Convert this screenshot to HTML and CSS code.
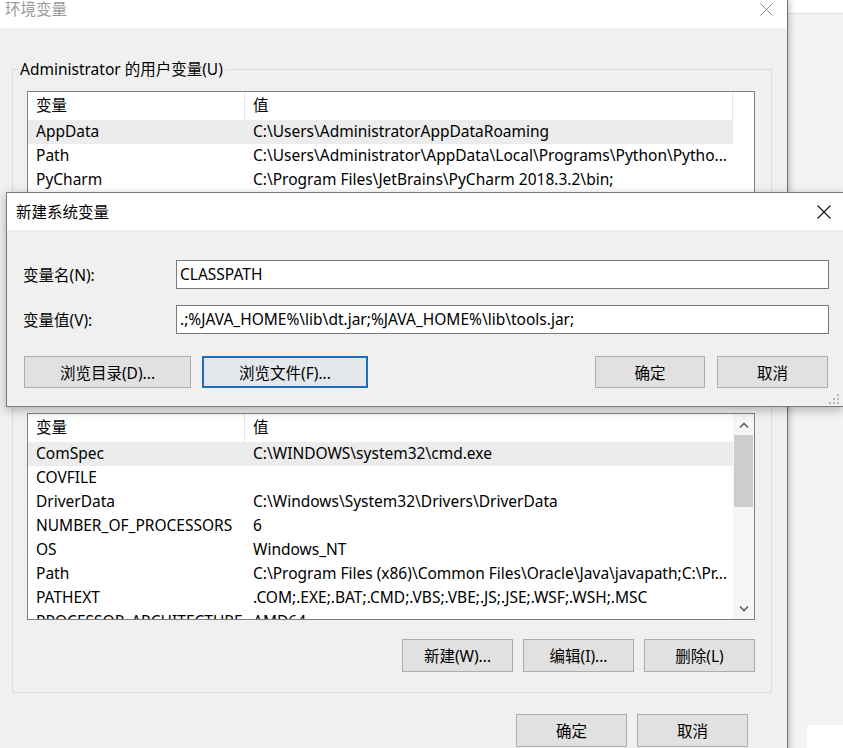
FILE: index.html
```html
<!DOCTYPE html>
<html lang="zh-CN">
<head>
<meta charset="utf-8">
<title>环境变量</title>
<link rel="stylesheet" href="styles.css">
</head>
<body>
<div class="desktop">
  <div class="bg-top"></div>
  <div class="bg-box"></div>

  <div class="win">
    <div class="win-title">
      <span class="win-title-text">环境变量</span>
      <svg class="win-close" width="13" height="13" viewBox="0 0 13 13"><path d="M0.5 0.5L12.5 12.5M12.5 0.5L0.5 12.5" stroke="#8c8c8c" stroke-width="1" fill="none"/></svg>
    </div>
    <div class="win-body">
      <div class="group g1">
        <div class="legend">Administrator 的用户变量(U)</div>
        <div class="list l1">
          <div class="table">
            <div class="hdr"><div class="c1">变量</div><div class="c2">值</div></div>
            <div class="row sel"><div class="c1">AppData</div><div class="c2">C:\Users\AdministratorAppDataRoaming</div></div>
            <div class="row"><div class="c1">Path</div><div class="c2">C:\Users\Administrator\AppData\Local\Programs\Python\Pytho...</div></div>
            <div class="row"><div class="c1">PyCharm</div><div class="c2">C:\Program Files\JetBrains\PyCharm 2018.3.2\bin;</div></div>
          </div>
        </div>
      </div>

      <div class="group g2">
        <div class="list l2">
          <div class="table">
            <div class="hdr"><div class="c1">变量</div><div class="c2">值</div></div>
            <div class="row sel"><div class="c1">ComSpec</div><div class="c2">C:\WINDOWS\system32\cmd.exe</div></div>
            <div class="row"><div class="c1">COVFILE</div><div class="c2"></div></div>
            <div class="row"><div class="c1">DriverData</div><div class="c2">C:\Windows\System32\Drivers\DriverData</div></div>
            <div class="row"><div class="c1">NUMBER_OF_PROCESSORS</div><div class="c2">6</div></div>
            <div class="row"><div class="c1">OS</div><div class="c2">Windows_NT</div></div>
            <div class="row"><div class="c1">Path</div><div class="c2">C:\Program Files (x86)\Common Files\Oracle\Java\javapath;C:\Pr...</div></div>
            <div class="row"><div class="c1">PATHEXT</div><div class="c2">.COM;.EXE;.BAT;.CMD;.VBS;.VBE;.JS;.JSE;.WSF;.WSH;.MSC</div></div>
            <div class="row"><div class="c1">PROCESSOR_ARCHITECTURE</div><div class="c2">AMD64</div></div>
          </div>
          <div class="sb">
            <div class="sb-btn"><svg width="10" height="6" viewBox="0 0 10 6"><path d="M1 5.5L5 1.5L9 5.5" stroke="#606060" stroke-width="1.6" fill="none"/></svg></div>
            <div class="sb-thumb"></div>
            <div class="sb-track"></div>
            <div class="sb-btn"><svg width="10" height="6" viewBox="0 0 10 6"><path d="M1 0.5L5 4.5L9 0.5" stroke="#606060" stroke-width="1.6" fill="none"/></svg></div>
          </div>
        </div>
        <div class="btn-row">
          <button class="btn">新建(W)...</button>
          <button class="btn">编辑(I)...</button>
          <button class="btn">删除(L)</button>
        </div>
      </div>

      <div class="win-actions">
        <button class="btn">确定</button>
        <button class="btn">取消</button>
      </div>
    </div>
  </div>

  <div class="dlg">
    <div class="dlg-title">
      <span>新建系统变量</span>
      <svg class="dlg-close" width="14" height="14" viewBox="0 0 14 14"><path d="M0.5 0.5L13.5 13.5M13.5 0.5L0.5 13.5" stroke="#111" stroke-width="1.1" fill="none"/></svg>
    </div>
    <div class="dlg-body">
      <div class="field">
        <label class="field-label">变量名(N):</label>
        <div class="field-input">CLASSPATH</div>
      </div>
      <div class="field">
        <label class="field-label">变量值(V):</label>
        <div class="field-input">.;%JAVA_HOME%\lib\dt.jar;%JAVA_HOME%\lib\tools.jar;</div>
      </div>
      <div class="dlg-btns">
        <button class="btn w167">浏览目录(D)...</button>
        <button class="btn w166 focus">浏览文件(F)...</button>
        <button class="btn w110 push">确定</button>
        <button class="btn w111">取消</button>
      </div>
    </div>
    <svg class="grip" width="10" height="10" viewBox="0 0 10 10">
      <rect x="8" y="0" width="2" height="2" fill="#b8b8b8"/>
      <rect x="4" y="4" width="2" height="2" fill="#b8b8b8"/>
      <rect x="8" y="4" width="2" height="2" fill="#b8b8b8"/>
      <rect x="0" y="8" width="2" height="2" fill="#b8b8b8"/>
      <rect x="4" y="8" width="2" height="2" fill="#b8b8b8"/>
      <rect x="8" y="8" width="2" height="2" fill="#b8b8b8"/>
    </svg>
  </div>
</div>
</body>
</html>
```

FILE: styles.css
```css
* { box-sizing: border-box; }

body {
  margin: 0;
  font-family: "Noto Sans", "Noto Sans CJK SC", sans-serif;
  font-size: 15.5px;
  color: #000;
}

.desktop {
  position: relative;
  width: 843px;
  height: 748px;
  overflow: hidden;
  background: #f3f3f4;
}

.bg-top {
  height: 14px;
  background: #fff;
  border-bottom: 1px solid #e3e3e3;
}

.bg-box {
  position: absolute;
  left: 807px;
  top: 725px;
  width: 36px;
  height: 23px;
  background: #fff;
}

/* main window */
.win {
  position: absolute;
  left: 0;
  top: 0;
  width: 788px;
  height: 770px;
  background: #f0f0f0;
  border-right: 1px solid #707070;
  box-shadow: 2px 0 6px rgba(0, 0, 0, 0.22);
}

.win-title {
  height: 28px;
  background: #fff;
  display: flex;
  justify-content: space-between;
  align-items: flex-start;
  padding: 0 14px 0 5px;
}

.win-title-text {
  line-height: 18px;
  color: #9a9a9a;
}

.win-close { margin-top: 3px; }

.win-body { padding-top: 41px; }

.group {
  margin-left: 12px;
  width: 760px;
  border: 1px solid #dcdcdc;
}

.legend {
  display: table;
  margin: -11px 0 0 4px;
  padding: 0 3px;
  line-height: 20px;
  background: #f0f0f0;
}

.g1 { padding-bottom: 14px; }
.g2 { margin-top: 22px; padding-bottom: 20px; }

.list {
  margin: 12px 16px 0 14px;
  border: 1px solid #7f7f7f;
  background: #fff;
  display: flex;
  overflow: hidden;
}

.l1 { height: 236px; }
.l2 { height: 207px; margin-top: 48px; }

.table { width: 705px; flex: none; }

.hdr, .row { display: flex; white-space: nowrap; }
.hdr { height: 28px; line-height: 27px; }
.row { height: 24px; line-height: 23px; }

.c1, .c2 { overflow: hidden; padding-left: 8px; }
.c1 { width: 217px; flex: none; }
.c2 { flex: 1; }

.hdr .c1 { border-right: 1px solid #e5e5e5; }
.l1 .hdr .c2 { border-right: 1px solid #e5e5e5; }

.row.sel { background: #ececec; }

.sb {
  width: 21px;
  flex: none;
  background: #f5f5f5;
  display: flex;
  flex-direction: column;
  padding: 0 1px;
}

.sb-btn {
  height: 21px;
  display: flex;
  align-items: center;
  justify-content: center;
  flex: none;
}

.sb-thumb {
  height: 72px;
  background: #cdcdcd;
  flex: none;
}

.sb-track { flex: 1; }

.btn {
  font-family: inherit;
  font-size: 15.5px;
  color: #000;
  background: #e1e1e1;
  border: 1px solid #adadad;
  padding: 0;
  margin: 0;
  width: 111px;
  height: 33px;
}

.btn-row {
  display: flex;
  justify-content: flex-end;
  gap: 10px;
  margin: 19px 16px 0 0;
}

.win-actions {
  display: flex;
  justify-content: flex-end;
  gap: 10px;
  margin: 21px 39px 0 0;
}

/* dialog */
.dlg {
  position: absolute;
  left: 6px;
  top: 192px;
  width: 838px;
  height: 215px;
  background: #f0f0f0;
  border: 1px solid #7a7a7a;
  box-shadow: 0 3px 10px rgba(0, 0, 0, 0.28);
}

.dlg-title {
  height: 37px;
  background: #fff;
  display: flex;
  justify-content: space-between;
  align-items: center;
  padding: 0 12px 0 9px;
}

.dlg-body { padding: 30px 14px 0 16px; }

.field {
  display: flex;
  align-items: center;
}

.field + .field { margin-top: 16px; }

.field-label { width: 153px; flex: none; }

.field-input {
  flex: 1;
  height: 29px;
  line-height: 26px;
  border: 1px solid #7a7a7a;
  background: #fff;
  padding-left: 3px;
  white-space: nowrap;
}

.dlg-btns {
  display: flex;
  gap: 11px;
  margin: 22px 1px 0 1px;
}

.dlg-btns .btn { height: 32px; }
.w167 { width: 167px; }
.w166 { width: 166px; }
.w110 { width: 110px; }
.push { margin-left: auto; margin-right: 1px; }

.btn.focus {
  border: 2px solid #1f6db3;
  background: #e4e7eb;
}

.grip {
  position: absolute;
  right: 4px;
  bottom: 2px;
}
```
